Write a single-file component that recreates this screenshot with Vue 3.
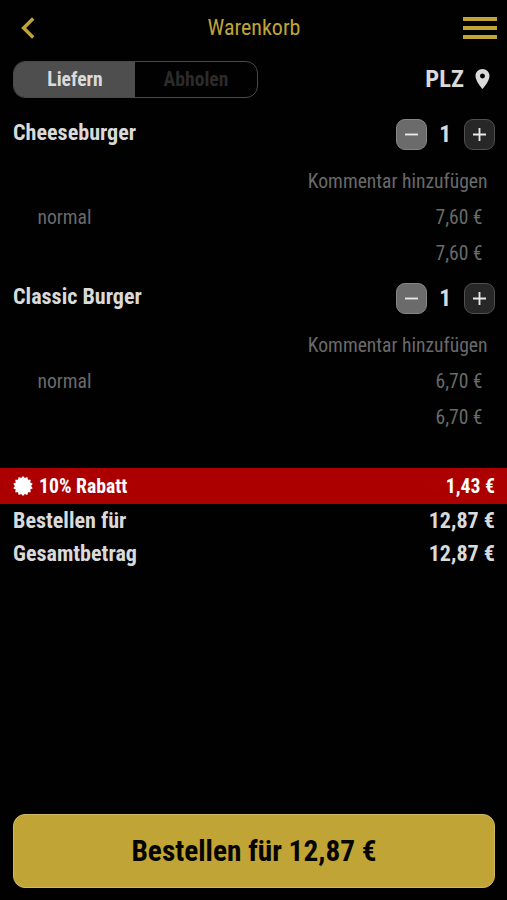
<script setup>
import { ref } from 'vue'

const mode = ref('Liefern')
const modes = ['Liefern', 'Abholen']
const items = ref([
  { name: 'Cheeseburger', count: 1, variant: 'normal', price: '7,60 €', total: '7,60 €' },
  { name: 'Classic Burger', count: 1, variant: 'normal', price: '6,70 €', total: '6,70 €' },
])
const totals = [
  { label: 'Bestellen für', value: '12,87 €' },
  { label: 'Gesamtbetrag', value: '12,87 €' },
]
// Outline of the fourteen-toothed discount seal
const seal = Array.from({ length: 28 }, (_, i) => {
  const r = i % 2 ? 8.1 : 10
  const a = (i * Math.PI) / 14
  return `${(10 + r * Math.sin(a)).toFixed(2)},${(10 - r * Math.cos(a)).toFixed(2)}`
}).join(' ')
</script>

<template>
  <main class="screen">
    <header class="bar">
      <svg class="back" viewBox="0 0 14 22"><path d="M12.2 1.5 2.6 11l9.600 9.500" /></svg>
      <h1 class="title">Warenkorb</h1>
      <div class="menu"><i></i><i></i><i></i></div>
    </header>

    <section class="options">
      <div class="tabs">
        <button v-for="m in modes" :key="m" class="tab" :class="{ active: m === mode }" @click="mode = m">{{ m }}</button>
      </div>
      <div class="plz">
        <span>PLZ</span>
        <svg class="pin" viewBox="5 2 14 20"><path fill-rule="evenodd" d="M12 2C8.130 2 5 5.130 5 9c0 5.250 7 13 7 13s7-7.750 7-13c0-3.870-3.130-7-7-7zm0 9.500a2.500 2.500 0 0 1 0-5 2.500 2.500 0 0 1 0 5z" /></svg>
      </div>
    </section>

    <section v-for="item in items" :key="item.name" class="item">
      <div class="head">
        <span class="name">{{ item.name }}</span>
        <div class="stepper">
          <button class="step minus" @click="item.count--"><svg viewBox="0 0 14 14"><path d="M0 7h14" /></svg></button>
          <span class="count">{{ item.count }}</span>
          <button class="step" @click="item.count++"><svg viewBox="0 0 14 14"><path d="M0 7h14M7 0v14" /></svg></button>
        </div>
      </div>
      <div class="line comment">Kommentar hinzufügen</div>
      <div class="line"><span>{{ item.variant }}</span><span>{{ item.price }}</span></div>
      <div class="line sum">{{ item.total }}</div>
    </section>

    <section class="discount">
      <svg class="seal" viewBox="0 0 20 20"><polygon :points="seal" /></svg>
      <span class="label">10% Rabatt</span>
      <span class="label amount">1,43 €</span>
    </section>
    <div v-for="t in totals" :key="t.label" class="total">
      <span>{{ t.label }}</span><span>{{ t.value }}</span>
    </div>

    <button class="order">Bestellen für 12,87 €</button>
  </main>
</template>

<style>
body { background: #010101; }
</style>

<style scoped>
.screen {
  box-sizing: border-box;
  height: 900px;
  padding-bottom: 12px;
  display: flex;
  flex-direction: column;
  overflow: hidden;
  background: #010101;
  color: #dadada;
  font-family: 'Roboto Condensed', Roboto, sans-serif;
  font-stretch: 75%;
  font-size: 22.1px;
  font-weight: 700;
  line-height: 1;
  white-space: nowrap;
}
button { font: inherit; font-stretch: 75%; color: inherit; padding: 0; box-sizing: border-box; }
.bar {
  height: 56px;
  display: grid;
  grid-template-columns: 60px 1fr 60px;
  align-items: center;
  padding: 0 10px 0 20.500px;
  box-sizing: border-box;
}
.back { width: 14px; height: 22px; fill: none; stroke: #c0a436; stroke-width: 3.4; }
.title { margin: 0; padding: 0 9.500px 1px 0; text-align: center; font-size: 22px; font-weight: 400; color: #c0a436; }
.menu { justify-self: end; width: 34px; display: grid; gap: 5px; }
.menu i { height: 4.2px; background: #c0a436; }
.options { height: 60px; box-sizing: border-box; display: flex; justify-content: space-between; padding: 5px 17px 0 13px; }
.tabs {
  box-sizing: border-box;
  width: 245px;
  height: 36.500px;
  display: flex;
  overflow: hidden;
  border: 1px solid #4a4a4a;
  border-radius: 12px;
}
.tab { flex: 1; padding-top: 2px; border: 0; background: none; color: #2b2b2b; font-size: 19.600px; }
.tab.active { flex: 0 0 121px; padding-left: 1px; background: #4e4e4e; color: #dadada; }
.plz { height: 36px; display: flex; align-items: center; gap: 11px; font-size: 24.500px; }
.pin { width: 15px; height: 20px; fill: #dadada; }
.item { height: 164px; }
.head { height: 36px; display: flex; justify-content: space-between; align-items: center; margin-bottom: 11px; padding: 0 12px 0 13px; }
.name { padding-bottom: 3px; }
.stepper { display: flex; align-items: center; }
.step {
  width: 31px;
  height: 31px;
  display: grid;
  place-items: center;
  border: 1px solid #505050;
  border-radius: 9px;
  background: #272727;
}
.step.minus { background: #6b6b6b; border-color: #868686; }
.step svg { width: 13px; height: 13px; stroke: #e8e8e8; stroke-width: 2; }
.count { width: 37.500px; padding-top: 2px; text-align: center; font-size: 23.500px; }
.line {
  height: 36px;
  box-sizing: border-box;
  display: flex;
  justify-content: space-between;
  align-items: center;
  padding: 2px 24.500px 0 37.500px;
  font-size: 19.600px;
  font-weight: 400;
  color: #6a6a6a;
}
.comment { justify-content: flex-end; padding-right: 19.500px; }
.sum { justify-content: flex-end; }
.discount {
  height: 36.500px;
  margin-top: 23.500px;
  box-sizing: border-box;
  padding: 0 12px 0 13px;
  display: flex;
  align-items: center;
  gap: 6px;
  background: #ac0000;
  color: #fff;
  font-size: 19.700px;
}
.seal { width: 20px; height: 20px; fill: #fff; }
.label { padding-top: 2px; }
.amount { margin-left: auto; }
.total { height: 33px; display: flex; align-items: center; justify-content: space-between; padding: 0 12px 0 13px; }
.order {
  margin: auto 12px 0 13px;
  height: 74px;
  padding-top: 2px;
  border: 1px solid #d0bb64;
  border-radius: 12px;
  background: #c0a436;
  color: #050400;
  font-size: 29.300px;
}
</style>
